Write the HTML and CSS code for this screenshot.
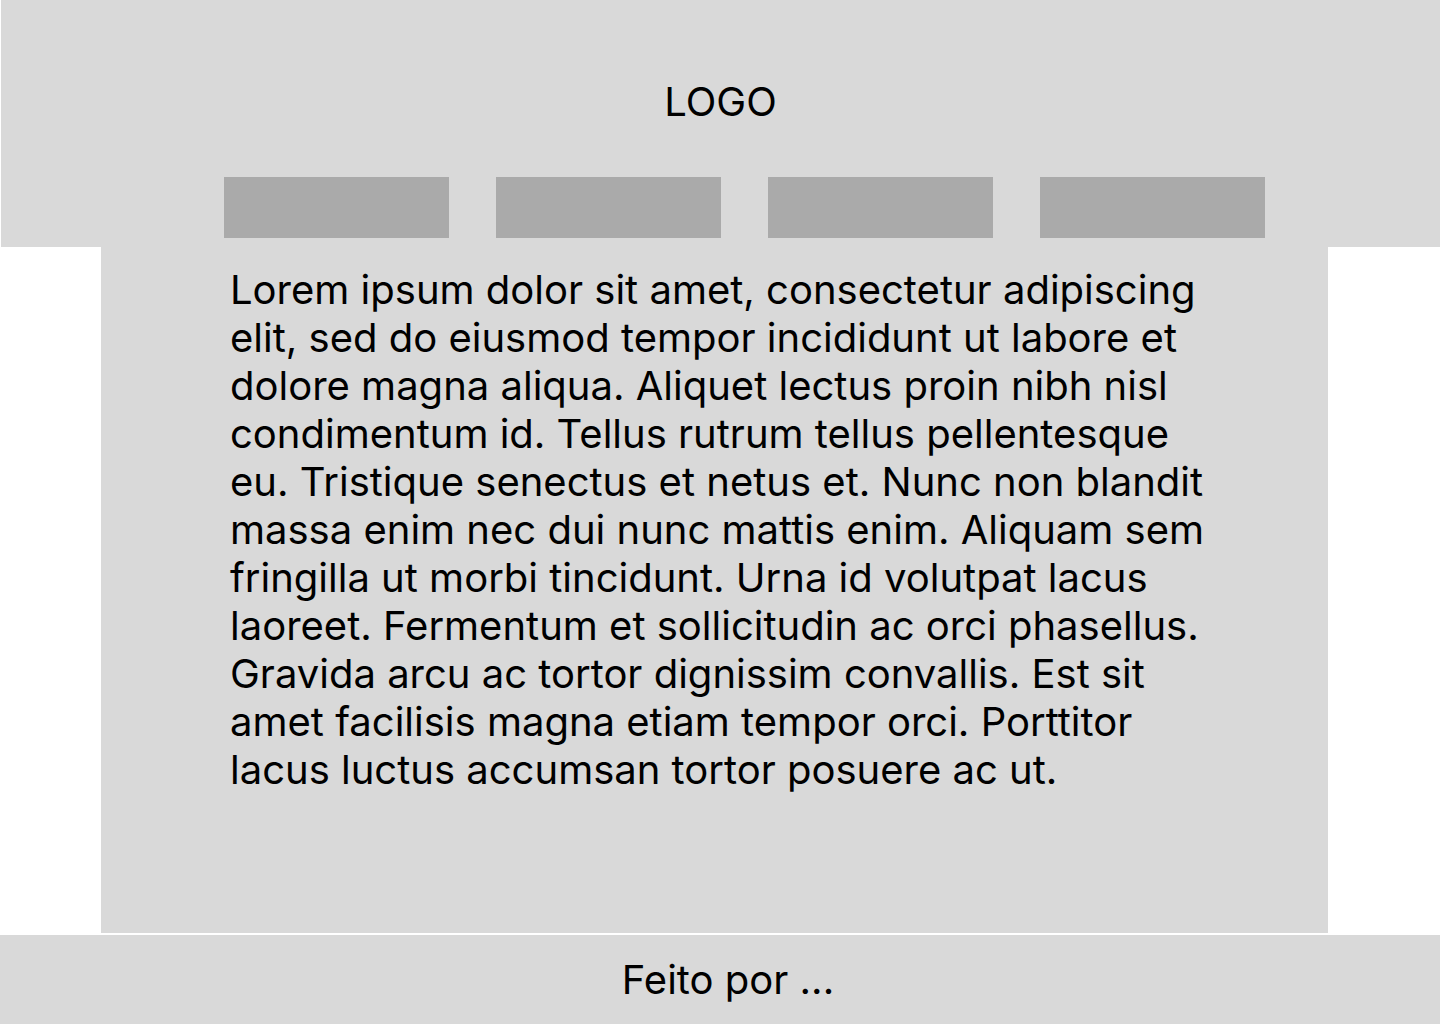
FILE: index.html
```html
<!DOCTYPE html>
<html lang="pt">
<head>
<meta charset="utf-8">
<title>Wireframe</title>
<link rel="stylesheet" href="styles.css">
</head>
<body>
<header class="header">
  <div class="logo">LOGO</div>
  <nav class="nav">
    <div class="nav-item"></div>
    <div class="nav-item"></div>
    <div class="nav-item"></div>
    <div class="nav-item"></div>
  </nav>
</header>
<main class="main">
  <p class="text">Lorem ipsum dolor sit amet, consectetur adipiscing elit, sed do eiusmod tempor incididunt ut labore et dolore magna aliqua. Aliquet lectus proin nibh nisl condimentum id. Tellus rutrum tellus pellentesque eu. Tristique senectus et netus et. Nunc non blandit massa enim nec dui nunc mattis enim. Aliquam sem fringilla ut morbi tincidunt. Urna id volutpat lacus laoreet. Fermentum et sollicitudin ac orci phasellus. Gravida arcu ac tortor dignissim convallis. Est sit amet facilisis magna etiam tempor orci. Porttitor lacus luctus accumsan tortor posuere ac ut.</p>
</main>
<footer class="footer">Feito por ...</footer>
</body>
</html>
```

FILE: styles.css
```css
* { box-sizing: border-box; }
html, body { margin: 0; padding: 0; background: #ffffff; }
body { font-family: Inter, "Noto Sans", sans-serif; color: #000; }

.header {
  margin-left: 1px;
  height: 247px;
  background: #d9d9d9;
  display: flex;
  flex-direction: column;
  align-items: center;
}
.logo {
  margin-top: 78px;
  font-size: 40px;
  line-height: 48px;
  font-weight: 400;
  text-align: center;
}
.nav {
  margin-top: 51px;
  align-self: stretch;
  display: flex;
  gap: 47px;
  padding-left: 223px;
}
.nav-item {
  width: 225px;
  height: 61px;
  background: #aaaaaa;
}

.main {
  margin: 0 112px 0 101px;
  height: 686px;
  background: #d9d9d9;
  padding: 19px 105px 0 129px;
}
.text {
  margin: 0;
  font-size: 40px;
  line-height: 48px;
}

.footer {
  margin-top: 2px;
  height: 89px;
  background: #d9d9d9;
  display: flex;
  justify-content: center;
  align-items: center;
  font-size: 40px;
  padding-left: 16px;
}
```
